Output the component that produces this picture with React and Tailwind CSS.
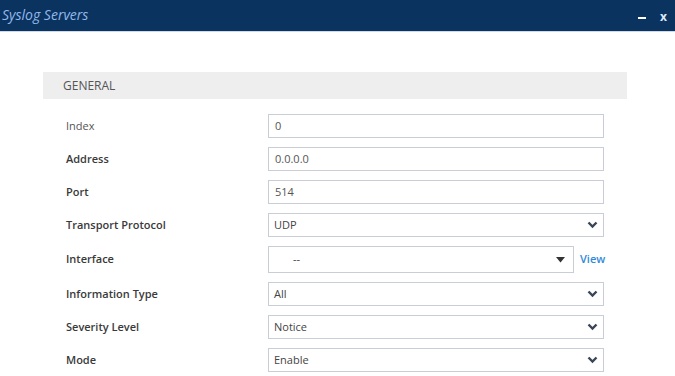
import React from "react";

function Chevron() {
    return (
        <svg width="11" height="8" viewBox="0 0 11 8" className="shrink-0">
            <polyline points="1.5,1.5 5.5,5.5 9.5,1.5" fill="none" stroke="#3a4656" strokeWidth="2.4" />
        </svg>
    );
}

function TextField({ value }) {
    return (
        <div className="w-[336px] h-[24px] border border-[#c9cdd5] bg-white flex items-center pl-[6px] text-[11px] text-[#555]">
            {value}
        </div>
    );
}

function SelectField({ value }) {
    return (
        <div className="w-[336px] h-[24px] border border-[#c9cdd5] bg-white flex items-center justify-between pl-[5px] pr-[5px] text-[11px] text-[#444]">
            <span>{value}</span>
            <Chevron />
        </div>
    );
}

function Row({ label, bold = true, children, tall }) {
    return (
        <div className={`flex items-center ${tall ? "h-[27px]" : "h-[24px]"}`}>
            <div className={`w-[225px] pl-[23px] text-[11px] ${bold ? "font-semibold text-[#3a3a3a]" : "text-[#555]"}`}>
                {label}
            </div>
            {children}
        </div>
    );
}

export default function App() {
    return (
        <div className="w-[675px] h-[376px] bg-white overflow-hidden" style={{ fontFamily: '"Open Sans", sans-serif' }}>
            {/* header */}
            <div className="h-[32px] bg-[#0a3360] border-b border-[#cfd9e8] flex items-center justify-between">
                <span className="pl-[2px] italic text-[14px] text-[#92b8ea] -mt-[2px]">Syslog Servers</span>
                <div className="flex items-center gap-[14px] pr-[8px] text-[#dce8f8] font-bold">
                    <span className="block w-[8px] h-[2px] bg-white mt-[4px]"></span>
                    <span className="text-[12px] mt-[2px]">x</span>
                </div>
            </div>

            <main className="pt-[40px]">
                {/* GENERAL */}
                <div className="ml-[43px] w-[584px] h-[27px] bg-[#eeeeee] flex items-center pl-[20px] text-[12px] text-[#555]">
                    GENERAL
                </div>

                <div className="mt-[15px] ml-[43px] flex flex-col gap-[9px]">
                    <Row label="Index" bold={false}><TextField value="0" /></Row>
                    <Row label="Address"><TextField value="0.0.0.0" /></Row>
                    <Row label="Port"><TextField value="514" /></Row>
                    <Row label="Transport Protocol"><SelectField value="UDP" /></Row>
                    <Row label="Interface" tall>
                        <div className="w-[306px] h-[27px] border border-[#c9cdd5] bg-white flex items-center justify-between pl-[24px] pr-[8px] text-[11px] text-[#444]">
                            <span>--</span>
                            <svg width="9" height="6" viewBox="0 0 9 6"><polygon points="0,0 9,0 4.5,5.5" fill="#333" /></svg>
                        </div>
                        <span className="ml-[6px] text-[11px] font-semibold text-[#2f8ad9]">View</span>
                    </Row>
                    <Row label="Information Type"><SelectField value="All" /></Row>
                    <Row label="Severity Level"><SelectField value="Notice" /></Row>
                    <Row label="Mode"><SelectField value="Enable" /></Row>
                </div>
            </main>
        </div>
    );
}
